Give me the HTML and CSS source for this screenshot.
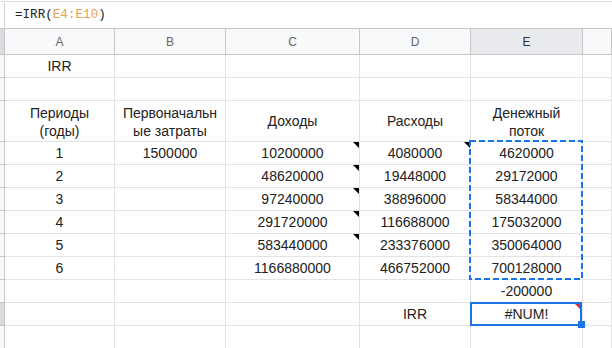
FILE: index.html
```html
<!DOCTYPE html>
<html lang="ru">
<head>
    <meta charset="UTF-8">
    <title>IRR</title>
    <link rel="stylesheet" href="styles.css">
</head>
<body>
    <div class="formula-bar">
        <div class="fx-gutter"></div>
        <div class="formula">=IRR(<span class="ref">E4:E10</span>)</div>
    </div>

    <div class="sheet">
        <!-- Column headers -->
        <div class="cell corner"></div>
        <div class="cell col-head">A</div>
        <div class="cell col-head">B</div>
        <div class="cell col-head">C</div>
        <div class="cell col-head">D</div>
        <div class="cell col-head active">E</div>
        <div class="cell col-head"></div>

        <!-- Row 1 -->
        <div class="cell row-head"></div>
        <div class="cell">IRR</div>
        <div class="cell"></div>
        <div class="cell"></div>
        <div class="cell"></div>
        <div class="cell"></div>
        <div class="cell"></div>

        <!-- Row 2 -->
        <div class="cell row-head"></div>
        <div class="cell"></div>
        <div class="cell"></div>
        <div class="cell"></div>
        <div class="cell"></div>
        <div class="cell"></div>
        <div class="cell"></div>

        <!-- Row 3: titles -->
        <div class="cell row-head"></div>
        <div class="cell wrap">Периоды<br>(годы)</div>
        <div class="cell wrap">Первоначальн<br>ые затраты</div>
        <div class="cell">Доходы</div>
        <div class="cell">Расходы</div>
        <div class="cell wrap">Денежный<br>поток</div>
        <div class="cell"></div>

        <!-- Rows 4-9: data -->
        <div class="cell row-head"></div>
        <div class="cell">1</div>
        <div class="cell">1500000</div>
        <div class="cell">10200000<span class="note"></span></div>
        <div class="cell">4080000<span class="note"></span></div>
        <div class="cell">4620000
            <svg class="copy-range" width="114" height="140">
                <rect x="1" y="1" width="112" height="138" fill="none" stroke="#1a73e8" stroke-width="2" stroke-dasharray="6 3"/>
            </svg>
        </div>
        <div class="cell"></div>

        <div class="cell row-head"></div>
        <div class="cell">2</div>
        <div class="cell"></div>
        <div class="cell">48620000<span class="note"></span></div>
        <div class="cell">19448000</div>
        <div class="cell">29172000</div>
        <div class="cell"></div>

        <div class="cell row-head"></div>
        <div class="cell">3</div>
        <div class="cell"></div>
        <div class="cell">97240000<span class="note"></span></div>
        <div class="cell">38896000</div>
        <div class="cell">58344000</div>
        <div class="cell"></div>

        <div class="cell row-head"></div>
        <div class="cell">4</div>
        <div class="cell"></div>
        <div class="cell">291720000<span class="note"></span></div>
        <div class="cell">116688000</div>
        <div class="cell">175032000</div>
        <div class="cell"></div>

        <div class="cell row-head"></div>
        <div class="cell">5</div>
        <div class="cell"></div>
        <div class="cell">583440000<span class="note"></span></div>
        <div class="cell">233376000</div>
        <div class="cell">350064000</div>
        <div class="cell"></div>

        <div class="cell row-head"></div>
        <div class="cell">6</div>
        <div class="cell"></div>
        <div class="cell">1166880000</div>
        <div class="cell">466752000</div>
        <div class="cell">700128000</div>
        <div class="cell"></div>

        <!-- Row 10 -->
        <div class="cell row-head"></div>
        <div class="cell"></div>
        <div class="cell"></div>
        <div class="cell"></div>
        <div class="cell"></div>
        <div class="cell">-200000</div>
        <div class="cell"></div>

        <!-- Row 11: result -->
        <div class="cell row-head active"></div>
        <div class="cell"></div>
        <div class="cell"></div>
        <div class="cell"></div>
        <div class="cell">IRR</div>
        <div class="cell">#NUM!
            <div class="selection"></div>
            <span class="error-flag"></span>
            <span class="fill-handle"></span>
        </div>
        <div class="cell"></div>

        <!-- Row 12 -->
        <div class="cell row-head"></div>
        <div class="cell"></div>
        <div class="cell"></div>
        <div class="cell"></div>
        <div class="cell"></div>
        <div class="cell"></div>
        <div class="cell"></div>
    </div>
</body>
</html>
```

FILE: styles.css
```css
:root {
    --grid-line: #e2e3e3;
    --head-line: #c4c7c5;
    --head-bg: #f8f9fa;
    --head-active: #e8eaed;
    --text: #222;
    --blue: #1a73e8;
}

* {
    margin: 0;
    padding: 0;
    box-sizing: border-box;
}

body {
    width: 612px;
    height: 348px;
    overflow: hidden;
    background: white;
    font-family: 'Liberation Sans', Arial, sans-serif;
    color: var(--text);
}

.formula-bar {
    display: flex;
    height: 28px;
    margin-top: 1px;
    border-top: 1px solid #e0e0e0;
    border-bottom: 1px solid var(--head-line);
}

.fx-gutter {
    width: 5px;
    margin: 1px 0 1px;
    border-right: 1px solid #d0d0d0;
}

.formula {
    padding-left: 10px;
    font-family: 'Liberation Mono', 'DejaVu Sans Mono', monospace;
    font-size: 12.6px;
    line-height: 26px;
    color: #222;
}

.ref {
    color: #e8a050;
}

.sheet {
    display: grid;
    grid-template-columns: 5px 110px 111px 134px 111px 112px 1fr;
    grid-template-rows: 26px 23px 23px 41px repeat(9, 23px);
}

.cell {
    position: relative;
    display: flex;
    align-items: center;
    justify-content: center;
    text-align: center;
    font-size: 14px;
    white-space: nowrap;
    border-right: 1px solid var(--grid-line);
    border-bottom: 1px solid var(--grid-line);
}

.wrap {
    line-height: 18px;
    padding-top: 2px;
}

.col-head {
    background: var(--head-bg);
    border-right-color: var(--head-line);
    border-bottom-color: var(--head-line);
    font-size: 12px;
    color: #666;
    padding-top: 1px;
}

.col-head.active {
    background: var(--head-active);
    color: #333;
}

.corner {
    background: #dadcdf;
    border-right-color: var(--head-line);
    border-bottom-color: var(--head-line);
}

.row-head {
    background: var(--head-bg);
    border-right-color: var(--head-line);
    border-bottom-color: var(--head-line);
}

.row-head.active {
    background: #d9dbde;
}

.note {
    position: absolute;
    top: 0;
    right: 0;
    width: 0;
    height: 0;
    border-top: 6px solid #000;
    border-left: 6px solid transparent;
}

.copy-range {
    position: absolute;
    top: -2px;
    left: -2px;
    z-index: 2;
}

.selection {
    position: absolute;
    top: -1px;
    left: -1px;
    width: 112px;
    height: 24px;
    border: 2px solid var(--blue);
    z-index: 2;
}

.error-flag {
    position: absolute;
    top: 1px;
    right: 2px;
    width: 0;
    height: 0;
    border-top: 5px solid #d93025;
    border-left: 5px solid transparent;
    z-index: 3;
}

.fill-handle {
    position: absolute;
    top: 18px;
    left: 107px;
    width: 7px;
    height: 7px;
    background: var(--blue);
    z-index: 3;
}
```
